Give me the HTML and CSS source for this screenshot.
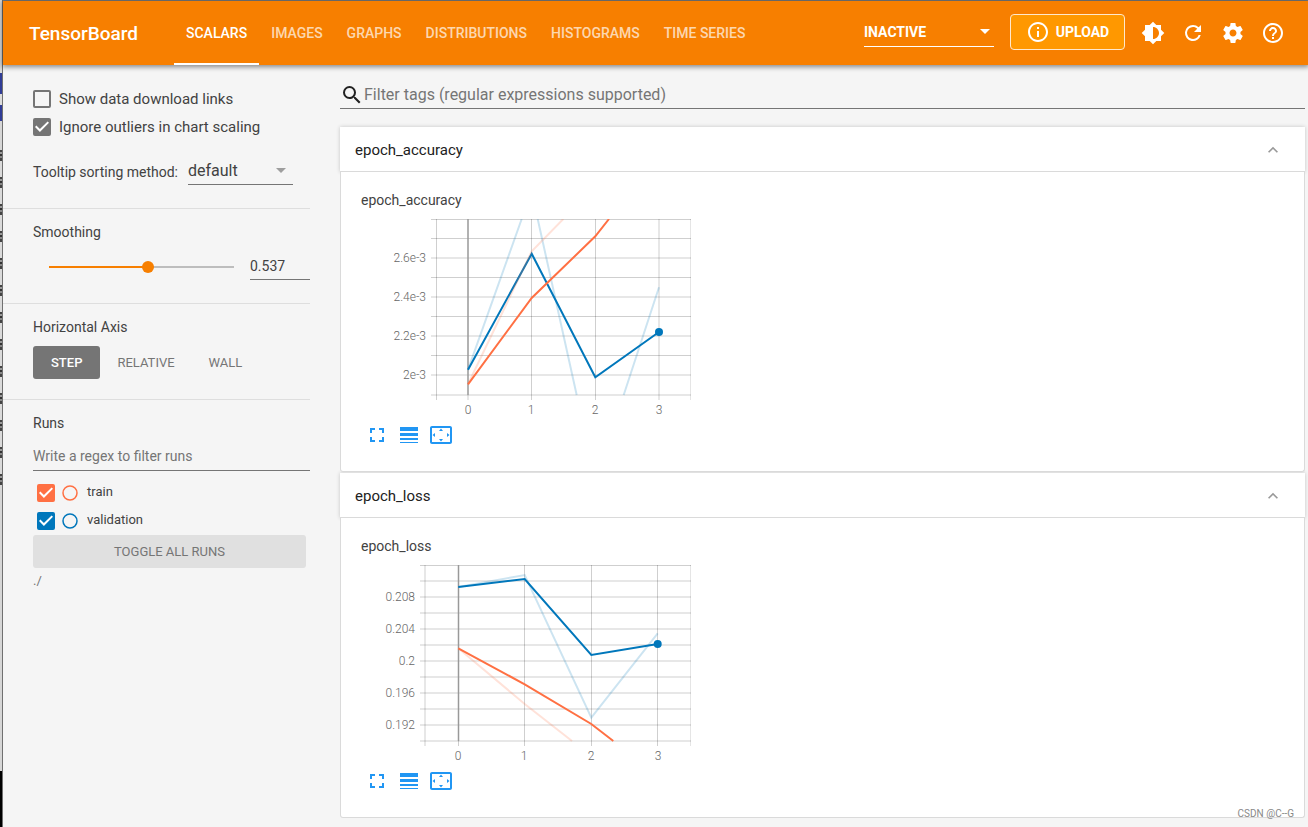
FILE: index.html
```
<!DOCTYPE html>
<html lang="en">
<head>
<meta charset="utf-8">
<title>TensorBoard</title>
<link rel="stylesheet" href="styles.css">
</head>
<body>
<div class="desktop-edge"></div>
<div class="app">
  <header class="topbar">
    <h1 class="brand">TensorBoard</h1>
    <nav class="tabs">
      <a class="tab active" href="#scalars">SCALARS</a>
      <a class="tab" href="#images">IMAGES</a>
      <a class="tab" href="#graphs">GRAPHS</a>
      <a class="tab" href="#distributions">DISTRIBUTIONS</a>
      <a class="tab" href="#histograms">HISTOGRAMS</a>
      <a class="tab" href="#timeseries">TIME SERIES</a>
    </nav>
    <div class="select-box inactive-select">
      <select aria-label="Inactive plugins"><option>INACTIVE</option></select>
      <svg class="arrow" viewBox="0 0 10 5" aria-hidden="true"><path d="M0 0h10L5 5z"/></svg>
    </div>
    <button class="upload" type="button">
      <svg viewBox="0 0 24 24" aria-hidden="true"><path d="M11 7h2v2h-2zm0 4h2v6h-2zm1-9C6.48 2 2 6.48 2 12s4.48 10 10 10 10-4.48 10-10S17.52 2 12 2zm0 18c-4.41 0-8-3.59-8-8s3.59-8 8-8 8 3.59 8 8-3.59 8-8 8z"/></svg>
      <span>UPLOAD</span>
    </button>
    <div class="actions">
      <button type="button" aria-label="Theme"><svg viewBox="0 0 24 24"><path d="M20 8.69V4h-4.69L12 .69 8.69 4H4v4.69L.69 12 4 15.31V20h4.69L12 23.31 15.31 20H20v-4.69L23.31 12 20 8.69zM12 18V6c3.31 0 6 2.69 6 6s-2.69 6-6 6z"/></svg></button>
      <button type="button" aria-label="Reload"><svg viewBox="0 0 24 24"><path d="M17.65 6.35A7.96 7.96 0 0 0 12 4a8 8 0 1 0 7.73 10h-2.08A6 6 0 1 1 12 6c1.66 0 3.14.69 4.22 1.78L13 11h7V4l-2.35 2.35z"/></svg></button>
      <button type="button" aria-label="Settings"><svg viewBox="0 0 24 24"><path d="M19.43 12.98c.04-.32.07-.64.07-.98s-.03-.66-.07-.98l2.11-1.65c.19-.15.24-.42.12-.64l-2-3.46c-.12-.22-.39-.3-.61-.22l-2.49 1c-.52-.4-1.08-.73-1.69-.98l-.38-2.65C14.46 2.18 14.25 2 14 2h-4c-.25 0-.46.18-.49.42l-.38 2.65c-.61.25-1.17.59-1.69.98l-2.49-1c-.23-.09-.49 0-.61.22l-2 3.46c-.13.22-.07.49.12.64l2.11 1.65c-.04.32-.07.65-.07.98s.03.66.07.98l-2.11 1.65c-.19.15-.24.42-.12.64l2 3.46c.12.22.39.3.61.22l2.49-1c.52.4 1.08.73 1.69.98l.38 2.65c.03.24.24.42.49.42h4c.25 0 .46-.18.49-.42l.38-2.65c.61-.25 1.17-.59 1.69-.98l2.49 1c.23.09.49 0 .61-.22l2-3.46c.12-.22.07-.49-.12-.64l-2.11-1.65zM12 15.5c-1.93 0-3.5-1.57-3.5-3.5s1.57-3.5 3.5-3.5 3.5 1.57 3.5 3.5-1.57 3.5-3.5 3.5z"/></svg></button>
      <button type="button" aria-label="Help"><svg viewBox="0 0 24 24"><path d="M11 18h2v-2h-2v2zm1-16C6.48 2 2 6.48 2 12s4.48 10 10 10 10-4.48 10-10S17.52 2 12 2zm0 18c-4.41 0-8-3.59-8-8s3.59-8 8-8 8 3.59 8 8-3.59 8-8 8zm0-14c-2.21 0-4 1.79-4 4h2c0-1.1.9-2 2-2s2 .9 2 2c0 2-3 1.75-3 5h2c0-2.25 3-2.5 3-5 0-2.21-1.79-4-4-4z"/></svg></button>
    </div>
  </header>

  <div class="body">
    <aside class="sidebar">
      <section class="panel options">
        <label class="check-row"><input class="check" type="checkbox"><span>Show data download links</span></label>
        <label class="check-row"><input class="check" type="checkbox" checked><span>Ignore outliers in chart scaling</span></label>
        <div class="sort-row">
          <label for="sort">Tooltip sorting method:</label>
          <div class="select-box sort-select">
            <select id="sort"><option>default</option></select>
            <svg class="arrow" viewBox="0 0 10 5" aria-hidden="true"><path d="M0 0h10L5 5z"/></svg>
          </div>
        </div>
      </section>

      <section class="panel smoothing">
        <label class="heading" for="smooth">Smoothing</label>
        <div class="smooth-row">
          <input id="smooth" class="slider" type="range" min="0" max="1" step="0.001" value="0.537" style="--value: 53.7%">
          <input class="smooth-value" type="text" value="0.537" aria-label="Smoothing value">
        </div>
      </section>

      <section class="panel axis">
        <h2 class="heading">Horizontal Axis</h2>
        <div class="axis-row">
          <button class="axis-button selected" type="button">STEP</button>
          <button class="axis-button" type="button">RELATIVE</button>
          <button class="axis-button" type="button">WALL</button>
        </div>
      </section>

      <section class="panel runs">
        <h2 class="heading">Runs</h2>
        <input class="run-filter" type="text" placeholder="Write a regex to filter runs" aria-label="Filter runs">
        <div class="run train">
          <input id="run-train" class="check" type="checkbox" checked>
          <button class="run-dot" type="button" aria-label="Only train"><svg viewBox="0 0 16 16"><circle cx="8" cy="8" r="7"/></svg></button>
          <label for="run-train">train</label>
        </div>
        <div class="run validation">
          <input id="run-validation" class="check" type="checkbox" checked>
          <button class="run-dot" type="button" aria-label="Only validation"><svg viewBox="0 0 16 16"><circle cx="8" cy="8" r="7"/></svg></button>
          <label for="run-validation">validation</label>
        </div>
        <button class="toggle-all" type="button">TOGGLE ALL RUNS</button>
        <p class="logdir">./</p>
      </section>
    </aside>

    <main class="main">
      <div class="search">
        <svg viewBox="0 0 24 24" aria-hidden="true"><path d="M15.5 14h-.79l-.28-.27A6.471 6.471 0 0 0 16 9.5 6.5 6.5 0 1 0 9.5 16c1.61 0 3.09-.59 4.23-1.57l.27.28v.79l5 4.99L20.49 19l-4.99-5zm-6 0C7.01 14 5 11.99 5 9.5S7.01 5 9.5 5 14 7.01 14 9.5 11.99 14 9.5 14z"/></svg>
        <input type="text" placeholder="Filter tags (regular expressions supported)" aria-label="Filter tags">
      </div>

      <section class="card">
        <button class="card-head" type="button">
          <span>epoch_accuracy</span>
          <svg viewBox="0 0 24 24" aria-hidden="true"><path d="M12 8l-6 6 1.41 1.41L12 10.83l4.59 4.58L18 14z"/></svg>
        </button>
        <div class="card-body">
          <h3 class="chart-title">epoch_accuracy</h3>
          <svg class="chart" viewBox="0 0 330 200" role="img" aria-label="epoch_accuracy chart">
            <path class="grid" d="M70 .5H330M70 19.5H330M70 39H330M70 58.5H330M70 78H330M70 97.5H330M70 117H330M70 136.5H330M70 156H330M70 176H330"/>
            <path class="grid" d="M75.5 0V181M170.5 0V181M234.5 0V181M298 0V181M107 176V181"/>
            <path class="grid edge" d="M329.5 0V181"/>
            <path class="zero" d="M107 0V176"/>
            <path class="line blue raw" d="M107 150.700L160.700 0M176.700 0L215.700 176M262.700 176L298 68.300"/>
            <path class="line blue" d="M107 150.700L170.700 34.700L234.300 158.300L298 113"/>
            <path class="line orange raw" d="M107 165.300L170.700 32.300L202.300 0"/>
            <path class="line orange" d="M107 165.300L170.700 79L234.300 17.300L248 0"/>
            <circle class="point" cx="298" cy="113" r="4"/>
            <g class="y-labels">
              <text x="65" y="43">2.6e-3</text><text x="65" y="82">2.4e-3</text><text x="65" y="121">2.2e-3</text><text x="65" y="160">2e-3</text>
            </g>
            <g class="x-labels">
              <text x="107" y="195">0</text><text x="170" y="195">1</text><text x="234" y="195">2</text><text x="298" y="195">3</text>
            </g>
          </svg>
          <div class="tools">
            <button type="button" aria-label="Fullscreen"><svg viewBox="0 0 24 24"><path d="M7 14H5v5h5v-2H7v-3zm-2-4h2V7h3V5H5v5zm12 7h-3v2h5v-5h-2v3zM14 5v2h3v3h2V5h-5z"/></svg></button>
            <button type="button" aria-label="Toggle log scale"><svg viewBox="0 0 24 24"><path d="M3 4h18v4H3zM3 10h18v3H3zM3 15h18v2H3zM3 19h18v1H3z"/></svg></button>
            <button type="button" aria-label="Fit domain"><svg viewBox="0 0 24 24"><path d="M12 5.500L10 8h4l-2-2.500zM18 10v4l2.500-2L18 10zM6 10l-2.500 2L6 14v-4zM14 16h-4l2 2.500 2-2.500zM21 3H3c-1.100 0-2 .9-2 2v14c0 1.100.9 2 2 2h18c1.100 0 2-.9 2-2V5c0-1.100-.9-2-2-2zm0 16H3V5h18v14z"/></svg></button>
          </div>
        </div>
      </section>

      <section class="card">
        <button class="card-head" type="button">
          <span>epoch_loss</span>
          <svg viewBox="0 0 24 24" aria-hidden="true"><path d="M12 8l-6 6 1.41 1.41L12 10.83l4.59 4.58L18 14z"/></svg>
        </button>
        <div class="card-body">
          <h3 class="chart-title">epoch_loss</h3>
          <svg class="chart" viewBox="0 0 330 200" role="img" aria-label="epoch_loss chart">
            <path class="grid" d="M59 .5H330M59 16H330M59 32H330M59 48H330M59 64H330M59 80H330M59 96H330M59 112H330M59 128H330M59 144H330M59 160H330M59 176H330"/>
            <path class="grid" d="M64 0V181M163.500 0V181M230.500 0V181M296.500 0V181M97.500 176V181"/>
            <path class="grid edge" d="M329.5 0V181"/>
            <path class="zero" d="M97.500 0V176"/>
            <path class="line blue raw" d="M97.300 22L163.700 10L230.300 152.700L296.700 68.300"/>
            <path class="line blue" d="M97.300 22L163.700 14L230.300 90L296.700 79"/>
            <path class="line orange raw" d="M97.300 83.300L163.700 139L211 176"/>
            <path class="line orange" d="M97.300 83.300L163.700 119.300L230.300 159L252.300 176"/>
            <circle class="point" cx="296.700" cy="79" r="4"/>
            <g class="y-labels">
              <text x="54" y="36">0.208</text><text x="54" y="68">0.204</text><text x="54" y="100">0.2</text><text x="54" y="132">0.196</text><text x="54" y="164">0.192</text>
            </g>
            <g class="x-labels">
              <text x="97" y="195">0</text><text x="163" y="195">1</text><text x="230" y="195">2</text><text x="297" y="195">3</text>
            </g>
          </svg>
          <div class="tools">
            <button type="button" aria-label="Fullscreen"><svg viewBox="0 0 24 24"><path d="M7 14H5v5h5v-2H7v-3zm-2-4h2V7h3V5H5v5zm12 7h-3v2h5v-5h-2v3zM14 5v2h3v3h2V5h-5z"/></svg></button>
            <button type="button" aria-label="Toggle log scale"><svg viewBox="0 0 24 24"><path d="M3 4h18v4H3zM3 10h18v3H3zM3 15h18v2H3zM3 19h18v1H3z"/></svg></button>
            <button type="button" aria-label="Fit domain"><svg viewBox="0 0 24 24"><path d="M12 5.500L10 8h4l-2-2.500zM18 10v4l2.500-2L18 10zM6 10l-2.500 2L6 14v-4zM14 16h-4l2 2.500 2-2.500zM21 3H3c-1.100 0-2 .9-2 2v14c0 1.100.9 2 2 2h18c1.100 0 2-.9 2-2V5c0-1.100-.9-2-2-2zm0 16H3V5h18v14z"/></svg></button>
          </div>
        </div>
      </section>
    </main>
  </div>
</div>
<div class="watermark">CSDN @C--G</div>
</body>
</html>
```
FILE: styles.css
```
* { box-sizing: border-box; }
body {
  margin: 0;
  min-height: 100vh;
  display: grid;
  grid-template-columns: 3px minmax(0, 1fr);
  background: #f5f5f5;
  color: #212121;
  font-family: Roboto, "Liberation Sans", sans-serif;
  font-size: 14px;
}
h1, h2, h3, p { margin: 0; font-weight: 400; }
button, input, select { font: inherit; color: inherit; margin: 0; }
button { border: 0; padding: 0; background: none; }
svg { display: block; fill: currentColor; flex: none; }

/* Slice of the desktop visible beside the window */
.desktop-edge {
  border-right: 1px solid #707070;
  background:
    repeating-linear-gradient(#444 0 2px, #999 2px 4px, #333 4px 6px, #888 6px 8px, #444 8px 11px, #dadada 11px 27px) 0 150px / 2px 335px no-repeat,
    linear-gradient(#dcdcdc 0 73px, #303c96 73px 94px, #dcdcdc 94px 105px, #303c96 105px 121px, #d6d6d6 121px 771px, #000 771px);
}
.app { border-top: 1px solid #808080; min-width: 0; }

.topbar {
  position: relative;
  display: flex;
  align-items: center;
  height: 64px;
  padding: 0 15px 0 26px;
  background: #f77f00;
  color: #fff;
  box-shadow: 0 1px 5px 1px rgba(0, 0, 0, .45);
}
.brand { width: 145px; font-size: 19px; font-weight: 500; }
.tabs { display: flex; align-self: stretch; flex: 1; }
.tab {
  display: flex;
  align-items: center;
  padding: 0 12px;
  border-top: 1px solid transparent;
  border-bottom: 2px solid transparent;
  color: rgba(255, 255, 255, .7);
  font-weight: 500;
  text-decoration: none;
}
.tab.active { color: #fff; border-bottom-color: #fff; }

.select-box { display: grid; align-items: center; border-bottom: 1px solid #757575; }
.select-box select {
  grid-area: 1 / 1;
  appearance: none;
  border: 0;
  border-radius: 0;
  padding: 0;
  background: none;
}
.select-box .arrow { grid-area: 1 / 1; justify-self: end; width: 10px; height: 5px; pointer-events: none; }
.inactive-select { width: 130px; height: 30px; border-color: #fff; font-weight: 700; margin-bottom: 2px; }
.inactive-select .arrow { margin-right: 4px; }
.upload {
  display: flex;
  align-items: center;
  justify-content: center;
  gap: 6px;
  width: 115px;
  height: 36px;
  margin: 0 8px 2px 16px;
  border: 1px solid #ffe8cc;
  border-radius: 4px;
  background: #ff9800;
  font-weight: 700;
}
.upload svg, .actions svg { width: 24px; height: 24px; }
.actions { display: flex; }
.actions button { width: 40px; height: 40px; display: grid; place-items: center; }

.body { display: grid; grid-template-columns: 307px minmax(0, 1fr); column-gap: 30px; padding-right: 3px; }

.panel { padding-left: 30px; border-bottom: 1px solid #dedede; color: #424242; }
.panel:last-child { border-bottom: 0; }
.heading { display: block; font-size: 14px; line-height: 16px; }
.options { padding-top: 20px; height: 144px; }
.check-row { display: flex; align-items: center; gap: 8px; height: 28px; font-size: 15px; }
.check {
  appearance: none;
  display: grid;
  place-items: center;
  flex: none;
  width: 18px;
  height: 18px;
  border: 2px solid #757575;
  border-radius: 2px;
}
.check:checked { background: currentColor; border-color: currentColor; color: #757575; }
.check:checked::after {
  content: "";
  width: 14px;
  height: 14px;
  background: #fff;
  clip-path: polygon(0 50%, 10% 40%, 35% 65%, 90% 10%, 100% 20%, 35% 85%);
}
.sort-row { display: flex; align-items: center; gap: 10px; margin-top: 16px; }
.sort-row label { padding-top: 2px; }
.sort-select { width: 105px; height: 28px; font-size: 16px; }
.sort-select .arrow { margin-right: 7px; color: #9e9e9e; }

.smoothing { padding-top: 15px; height: 95px; }
.smooth-row { display: flex; align-items: center; gap: 10px; margin-top: 12px; padding-left: 10px; }
.slider { appearance: none; flex: 1; min-width: 0; height: 12px; margin: 2px 0 0; background: none; }
.slider::-webkit-slider-runnable-track {
  height: 12px;
  background:
    linear-gradient(90deg, #f77f00 var(--value), #bdbdbd var(--value)) center / calc(100% - 12px) 2px no-repeat;
}
.slider::-webkit-slider-thumb { appearance: none; width: 12px; height: 12px; border-radius: 50%; background: #f77f00; }
.smooth-value {
  width: 60px;
  height: 28px;
  padding: 0;
  border: 0;
  border-bottom: 1px solid #757575;
  background: none;
}

.axis { padding-top: 15px; height: 96px; }
.axis-row { display: flex; margin-top: 11px; }
.axis-button { height: 33px; padding: 0 17px; border-radius: 3px; color: #757575; font-size: 13px; }
.axis-button.selected { padding: 0 18px; background: #757575; color: #fff; font-weight: 500; }

.runs { padding-top: 15px; }
.run-filter {
  display: block;
  width: 100%;
  height: 28px;
  margin: 12px 0 8px;
  padding: 0 0 2px;
  border: 0;
  border-bottom: 1px solid #757575;
  background: none;
}
::placeholder { color: #757575; opacity: 1; }
.run { display: flex; align-items: center; height: 28px; padding-left: 4px; font-size: 13px; }
.run-dot { width: 16px; height: 16px; margin: 0 9px 0 7px; }
.run-dot circle { fill: none; stroke: currentColor; stroke-width: 1.5; }
.run label { color: #424242; padding-bottom: 3px; }
.train, .train .check:checked { color: #ff7043; }
.validation, .validation .check:checked { color: #0077bb; }
.toggle-all {
  display: block;
  width: calc(100% - 4px);
  height: 33px;
  border-radius: 3px;
  background: #e0e0e0;
  color: #757575;
  font-size: 13px;
}
.logdir { margin-top: 5px; font-size: 13px; line-height: 16px; color: #757575; }

.main { padding-top: 16px; }
.search { display: flex; align-items: center; height: 28px; border-bottom: 1px solid #757575; margin-bottom: 18px; }
.search svg { width: 24px; height: 24px; }
.search input { flex: 1; height: 26px; border: 0; padding: 0; background: none; font-size: 16px; }

.card { margin-bottom: 1px; }
.card-head {
  display: flex;
  align-items: center;
  justify-content: space-between;
  width: 100%;
  height: 45px;
  padding: 1px 22px 0 15px;
  border-bottom: 1px solid #dadada;
  background: #fff;
  font-size: 15px;
  box-shadow: 0 0 4px rgba(0, 0, 0, .2);
}
.card-head svg { width: 20px; height: 20px; color: #999; }
.card-body { position: relative; padding: 19px 20px 20px; border: 1px solid #dadada; border-top: 0; border-radius: 0 0 3px 3px; background: #fff; }
.chart-title { font-size: 14px; line-height: 18px; margin-bottom: 10px; color: #424242; }
.chart { width: 330px; height: 200px; font-size: 12px; }
.grid { stroke: #000; stroke-opacity: .19; fill: none; }
.grid.edge { stroke-opacity: .1; }
.zero { stroke: #999; stroke-width: 1.5; fill: none; }
.line { fill: none; stroke-width: 2; }
.blue { stroke: #0077bb; }
.orange { stroke: #ff7043; }
.raw { stroke-opacity: .2; }
.point { fill: #0077bb; }
.y-labels, .x-labels { fill: #666; font-weight: 300; }
.y-labels { text-anchor: end; }
.x-labels { text-anchor: middle; }
.tools { display: flex; color: #2196f3; }
.tools button { width: 32px; height: 32px; display: grid; place-items: center; }
.tools svg { width: 24px; height: 24px; }
.watermark { position: absolute; right: 14px; bottom: 7px; font-size: 10px; line-height: 12px; color: #888; }
```
